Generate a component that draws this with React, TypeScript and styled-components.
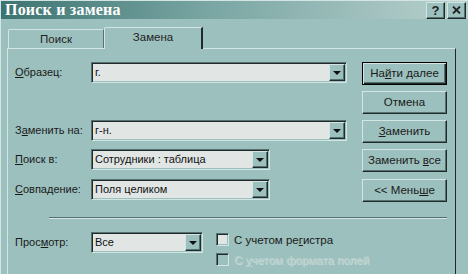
import React from 'react';
import styled, { createGlobalStyle } from 'styled-components';

const BG = '#9cc0bd';
const LIGHT = '#d3e5e2';
const SHADE = '#56716f';
const DARK = '#1f2b2a';
const FIELD = '#e1e6e5';

const GlobalStyle = createGlobalStyle`
  html, body {
    margin: 0;
    padding: 0;
    background: ${BG};
  }
  body {
    font-family: "Liberation Sans", Arial, sans-serif;
    font-size: 11px;
    color: #111;
  }
`;

const Window = styled.div`
  width: 468px;
  height: 274px;
  overflow: hidden;
  background: ${BG};
  display: flex;
  flex-direction: column;
  box-sizing: border-box;
  border-top: 1px solid ${LIGHT};
  border-left: 1px solid ${LIGHT};
`;

const TitleBar = styled.div`
  height: 22px;
  display: flex;
  align-items: center;
  justify-content: space-between;
  padding: 0 2px 0 4px;
  background: linear-gradient(to right, #3c7472 0%, #7aa6a3 45%, #b9d1ce 100%);
`;

const Title = styled.div`
  font-family: "Liberation Serif", "Times New Roman", serif;
  font-weight: bold;
  font-size: 16px;
  color: #ffffff;
  letter-spacing: 0.2px;
`;

const CaptionButtons = styled.div`
  display: flex;
  gap: 2px;
`;

const CaptionButton = styled.div`
  width: 19px;
  height: 17px;
  box-sizing: border-box;
  background: ${BG};
  border: 1px solid;
  border-color: ${LIGHT} ${DARK} ${DARK} ${LIGHT};
  box-shadow: inset -1px -1px 0 ${SHADE};
  display: flex;
  align-items: center;
  justify-content: center;
  font-family: "Liberation Sans", Arial, sans-serif;
  font-weight: bold;
  font-size: 13px;
  color: #222;
`;

const Content = styled.div`
  padding: 8px 12px 0 6px;
  display: flex;
  flex-direction: column;
`;

const TabStrip = styled.div`
  height: 21px;
  display: flex;
  align-items: flex-end;
  padding-left: 1px;
  position: relative;
  z-index: 1;
`;

const Tab = styled.div<{ $active?: boolean; $w: number }>`
  width: ${p => p.$w}px;
  height: ${p => (p.$active ? 22 : 19)}px;
  margin-bottom: ${p => (p.$active ? -1 : 0)}px;
  box-sizing: border-box;
  background: ${BG};
  border-top: 1px solid ${LIGHT};
  border-left: 1px solid ${LIGHT};
  border-right: ${p => (p.$active ? `2px solid ${DARK}` : `1px solid ${SHADE}`)};
  border-top-left-radius: 2px;
  text-align: center;
  padding-top: ${p => (p.$active ? 3 : 3)}px;
  font-size: 11.5px;
  color: #222;
`;

const Panel = styled.div`
  height: 240px;
  box-sizing: border-box;
  border-top: 1px solid ${LIGHT};
  border-left: 1px solid ${LIGHT};
  border-right: 1px solid ${DARK};
  padding: 13px 8px 0 7px;
  display: flex;
  flex-direction: column;
`;

const Grid = styled.div`
  display: grid;
  grid-template-columns: 76px 1fr 85px;
  grid-template-rows: 23px 23px 23px 24px 23px;
  row-gap: 6px;
`;

const Label = styled.div<{ $row: number }>`
  grid-column: 1;
  grid-row: ${p => p.$row};
  line-height: 21px;
  white-space: nowrap;
  color: #1a1a1a;
`;

const ComboCell = styled.div<{ $row: number }>`
  grid-column: 2;
  grid-row: ${p => p.$row};
`;

const ButtonCell = styled.div<{ $row: number }>`
  grid-column: 3;
  grid-row: ${p => p.$row};
`;

const Combo = styled.div<{ $w: number }>`
  width: ${p => p.$w}px;
  height: 21px;
  box-sizing: border-box;
  background: ${FIELD};
  border: 1px solid;
  border-color: ${SHADE} ${LIGHT} ${LIGHT} ${SHADE};
  box-shadow: inset 1px 1px 0 ${DARK}, inset -1px -1px 0 ${BG};
  display: flex;
  align-items: stretch;
  padding: 1px 1px 1px 2px;
`;

const FieldText = styled.div`
  flex: 1;
  line-height: 17px;
  padding-left: 1px;
  white-space: nowrap;
  overflow: hidden;
  color: #111;
`;

const DropButton = styled.div`
  width: 16px;
  box-sizing: border-box;
  background: ${BG};
  border: 1px solid;
  border-color: ${LIGHT} ${DARK} ${DARK} ${LIGHT};
  box-shadow: inset -1px -1px 0 ${SHADE};
  display: flex;
  align-items: center;
  justify-content: center;

  &::after {
    content: '';
    border-left: 4px solid transparent;
    border-right: 4px solid transparent;
    border-top: 4px solid #111;
    margin-top: 1px;
  }
`;

const Button = styled.div<{ $default?: boolean }>`
  width: 85px;
  height: 23px;
  box-sizing: border-box;
  background: ${BG};
  border: 1px solid;
  border-color: ${p => (p.$default ? `#000` : `${LIGHT} ${DARK} ${DARK} ${LIGHT}`)};
  box-shadow: ${p =>
    p.$default
      ? `inset 1px 1px 0 ${LIGHT}, inset -1px -1px 0 ${DARK}, inset -2px -2px 0 ${SHADE}`
      : `inset -1px -1px 0 ${SHADE}`};
  text-align: center;
  line-height: 20px;
  font-size: 11.5px;
  color: #1a1a1a;
  white-space: nowrap;
`;

const Key = styled.span`
  text-decoration: underline;
  text-underline-offset: 1px;
`;

const Separator = styled.div`
  margin: 15px 0 0 34px;
  height: 0;
  border-top: 1px solid ${SHADE};
  border-bottom: 1px solid ${LIGHT};
`;

const BottomRow = styled.div`
  margin-top: 13px;
  display: flex;
  align-items: flex-start;
`;

const BottomLabel = styled.div`
  width: 76px;
  line-height: 21px;
  color: #1a1a1a;
`;

const CheckColumn = styled.div`
  margin-left: 13px;
  display: flex;
  flex-direction: column;
  gap: 7px;
  padding-top: 1px;
`;

const CheckRow = styled.div`
  display: flex;
  align-items: center;
  gap: 5px;
  height: 13px;
`;

const CheckBox = styled.div<{ $disabled?: boolean }>`
  width: 13px;
  height: 13px;
  box-sizing: border-box;
  background: ${p => (p.$disabled ? BG : FIELD)};
  border: 1px solid;
  border-color: ${SHADE} ${LIGHT} ${LIGHT} ${SHADE};
  box-shadow: inset 1px 1px 0 ${DARK}, inset -1px -1px 0 ${BG};
`;

const CheckLabel = styled.div<{ $disabled?: boolean }>`
  font-size: 11.5px;
  white-space: nowrap;
  color: ${p => (p.$disabled ? '#b7cfcc' : '#1a1a1a')};
  text-shadow: ${p => (p.$disabled ? `1px 1px 0 #c9dcd9` : 'none')};
`;

const CloseIcon = () => (
  <svg width="9" height="8" viewBox="0 0 9 8">
    <path d="M1 0.5 L8 7.5 M8 0.5 L1 7.5" stroke="#222" strokeWidth="1.8" />
  </svg>
);

export default function App() {
  return (
    <>
      <GlobalStyle />
      <Window>
        <TitleBar>
          <Title>Поиск и замена</Title>
          <CaptionButtons>
            <CaptionButton>?</CaptionButton>
            <CaptionButton>
              <CloseIcon />
            </CaptionButton>
          </CaptionButtons>
        </TitleBar>
        <Content>
          <TabStrip>
            <Tab $w={96}>Поиск</Tab>
            <Tab $w={99} $active>Замена</Tab>
          </TabStrip>
          <Panel>
            <Grid>
              <Label $row={1}><Key>О</Key>бразец:</Label>
              <ComboCell $row={1}>
                <Combo $w={256}>
                  <FieldText>г.</FieldText>
                  <DropButton />
                </Combo>
              </ComboCell>
              <ButtonCell $row={1}>
                <Button $default>На<Key>й</Key>ти далее</Button>
              </ButtonCell>

              <ButtonCell $row={2}>
                <Button>Отмена</Button>
              </ButtonCell>

              <Label $row={3}>З<Key>а</Key>менить на:</Label>
              <ComboCell $row={3}>
                <Combo $w={256}>
                  <FieldText>г-н.</FieldText>
                  <DropButton />
                </Combo>
              </ComboCell>
              <ButtonCell $row={3}>
                <Button><Key>З</Key>аменить</Button>
              </ButtonCell>

              <Label $row={4}><Key>П</Key>оиск в:</Label>
              <ComboCell $row={4}>
                <Combo $w={179}>
                  <FieldText>Сотрудники : таблица</FieldText>
                  <DropButton />
                </Combo>
              </ComboCell>
              <ButtonCell $row={4}>
                <Button>Заменить <Key>в</Key>се</Button>
              </ButtonCell>

              <Label $row={5}><Key>С</Key>овпадение:</Label>
              <ComboCell $row={5}>
                <Combo $w={179}>
                  <FieldText>Поля целиком</FieldText>
                  <DropButton />
                </Combo>
              </ComboCell>
              <ButtonCell $row={5}>
                <Button>&lt;&lt; Мень<Key>ш</Key>е</Button>
              </ButtonCell>
            </Grid>

            <Separator />

            <BottomRow>
              <BottomLabel>Прос<Key>м</Key>отр:</BottomLabel>
              <Combo $w={112}>
                <FieldText>Все</FieldText>
                <DropButton />
              </Combo>
              <CheckColumn>
                <CheckRow>
                  <CheckBox />
                  <CheckLabel>С учетом ре<Key>г</Key>истра</CheckLabel>
                </CheckRow>
                <CheckRow>
                  <CheckBox $disabled />
                  <CheckLabel $disabled>С <Key>у</Key>четом формата полей</CheckLabel>
                </CheckRow>
              </CheckColumn>
            </BottomRow>
          </Panel>
        </Content>
      </Window>
    </>
  );
}
